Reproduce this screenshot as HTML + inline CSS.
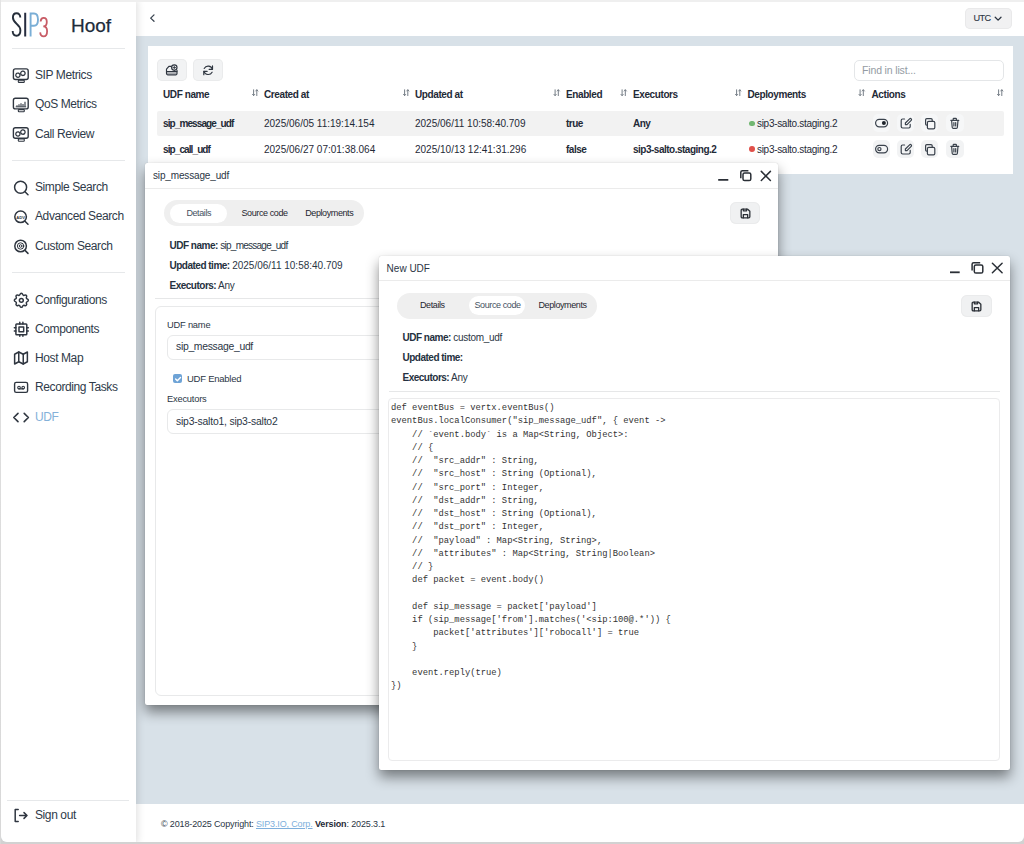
<!DOCTYPE html>
<html><head><meta charset="utf-8">
<style>
*{box-sizing:border-box;margin:0;padding:0}
html,body{width:1024px;height:844px;overflow:hidden;background:#fff;font-family:"Liberation Sans",sans-serif;color:#2b3645}
.abs{position:absolute}
#frame{position:absolute;left:0;top:0;width:1024px;height:844px;background:#d2d2d2}
#app{position:absolute;left:1px;top:2px;width:1023px;height:840px;background:#d8e1e8;border-radius:0 0 6px 6px;overflow:hidden}
#side{position:absolute;left:0;top:0;width:136px;height:844px;background:#fff;box-shadow:1px 0 8px rgba(0,0,0,.14);z-index:2}
.hr{position:absolute;height:1px;background:#e6e8ea}
.mi{position:absolute;left:35px;font-size:12px;letter-spacing:-.4px;color:#2f3b4a;white-space:nowrap;line-height:14px}
.ic{position:absolute}
#hdr{position:absolute;left:136px;top:0;width:888px;height:35.5px;background:#fff}
#foot{position:absolute;left:136px;top:804px;width:888px;height:40px;background:#fff}
.card{position:absolute;background:#fff}
.btn{position:absolute;background:#f2f3f4;border-radius:5px;box-shadow:inset 0 0 0 1px #eaebec}
.th{position:absolute;font-weight:bold;font-size:10px;letter-spacing:-.4px;color:#1f2a37;white-space:nowrap;line-height:12px;margin-top:1px}
.td{position:absolute;font-size:10px;color:#1f2a37;white-space:nowrap;line-height:12px}
.tdb{font-weight:bold;letter-spacing:-.5px}
.win{position:absolute;background:#fff;border-radius:2px;box-shadow:0 7px 13px rgba(0,0,0,.46),0 0 1px rgba(0,0,0,.25)}
.wt{position:absolute;font-size:11px;color:#2b3645;white-space:nowrap;line-height:13px}
.tabs{position:absolute;background:#efefef;border-radius:14px}
.tab{position:absolute;font-size:9px;color:#1f2630;white-space:nowrap;line-height:11px;letter-spacing:-.4px}
.pill{position:absolute;background:#fff;border-radius:10px}
.kv{position:absolute;font-size:10px;color:#2b3645;white-space:nowrap;line-height:12px;letter-spacing:-.3px}
.kv b{color:#253140;letter-spacing:-.5px}
.dg{letter-spacing:0}
pre{position:absolute;font-family:"Liberation Mono",monospace;font-size:8.8px;line-height:13.25px;color:#333;white-space:pre}
</style></head><body>
<div id="frame"></div><div class="abs" style="left:0;top:0;width:1024px;height:2px;background:#efefef"></div><div class="abs" style="left:0;top:0;width:1px;height:844px;background:linear-gradient(#e4e4e4,#d8d8d8)"></div>
<div id="app"><div id="c" style="position:absolute;left:-1px;top:-2px;width:1024px;height:844px">
  <div id="hdr"></div>
  <div id="foot"></div>
  <div id="side">
<svg class="abs" style="left:0;top:0" width="136" height="48" viewBox="0 0 136 48" fill="none" stroke-linecap="butt">
<path d="M20.3 17.5 C20.3 14.8 18.7 13.3 16.6 13.3 C14.4 13.3 12.9 15 12.9 17.6 C12.9 20.8 15 22.4 16.8 23.9 C18.8 25.5 20.4 27.3 20.4 30.6 C20.4 33.6 18.8 35.7 16.5 35.7 C14.1 35.7 12.7 33.7 12.7 31" stroke="#262f3b" stroke-width="1.9"/>
<path d="M25.2 12.7 V36.6" stroke="#262c3f" stroke-width="2"/>
<path d="M30.6 36.6 V13.5 H34 C36.5 13.5 38 15.5 38 19.6 C38 23.7 36.5 25.8 34 25.8 H30.6" stroke="#7aaed6" stroke-width="1.9"/>
<path d="M40.6 21.5 C40.8 19.2 42 17.9 43.7 17.9 C45.6 17.9 46.8 19.5 46.8 22 C46.8 24.8 45.5 26.4 43.3 26.4 C45.7 26.4 47.1 28.2 47.1 31.3 C47.1 34.5 45.7 36.4 43.6 36.4 C41.6 36.4 40.4 34.8 40.2 32.4" stroke="#c85c66" stroke-width="1.8"/>
</svg>
<div class="abs" style="left:71px;top:16.4px;font-size:19px;line-height:20px;color:#1d2b3a;-webkit-text-stroke:.25px #1d2b3a">Hoof</div>
<div class="hr" style="left:12px;top:48px;width:113px"></div>
<div class="hr" style="left:12px;top:160px;width:113px"></div>
<div class="hr" style="left:12px;top:272px;width:113px"></div>
<div class="hr" style="left:7px;top:800px;width:122px"></div>
<svg class="abs" style="left:0;top:0" width="36" height="844" viewBox="0 0 36 844" fill="none" stroke="#2f3640" stroke-linecap="round" stroke-linejoin="round">
 <!-- SIP metrics monitor -->
 <g stroke-width="1.4">
  <rect x="13.4" y="68.9" width="14.8" height="10.6" rx="2"/>
  <rect x="18.3" y="80.2" width="6" height="2.2" rx=".7" stroke-width="1.1"/>
  <circle cx="17.9" cy="75.2" r="2.1" stroke-width="1.3" stroke-dasharray=".9 .45"/>
  <circle cx="22.9" cy="73.3" r="2.2" stroke-width="1.3" stroke-dasharray=".9 .45"/>
 </g>
 <g stroke-width="1.4">
  <rect x="13.4" y="98.3" width="14.8" height="10.6" rx="2"/>
  <rect x="18.3" y="109.6" width="6" height="2.2" rx=".7" stroke-width="1.1"/>
  <path d="M15.6 106.9 h10.6" stroke-width=".8" stroke-linecap="butt"/>
  <path d="M17 106.9v-1.6 M19 106.9v-2.6 M21 106.9v-3.6 M23 106.9v-2.8 M25 106.9v-5.2" stroke-width="1.1" stroke-linecap="butt"/>
 </g>
 <g stroke-width="1.4">
  <rect x="13.4" y="127.7" width="14.8" height="10.6" rx="2"/>
  <rect x="18.3" y="139" width="6" height="2.2" rx=".7" stroke-width="1.1"/>
  <circle cx="17.9" cy="134" r="2.1" stroke-width="1.3" stroke-dasharray=".9 .45"/>
  <circle cx="22.9" cy="132.1" r="2.2" stroke-width="1.3" stroke-dasharray=".9 .45"/>
 </g>
 <!-- search -->
 <g stroke-width="1.5">
  <circle cx="20.6" cy="187.2" r="6"/><path d="M25 191.8 L28 194.8"/>
  <circle cx="20.6" cy="216.8" r="5.8"/><path d="M25 221.2 L28 224.2"/>
  <text x="20.6" y="218.6" font-size="4.2" font-family="Liberation Sans" text-anchor="middle" fill="#2f3640" stroke="none" font-weight="bold">ADV</text>
  <circle cx="20.6" cy="246" r="5.8"/><path d="M25 250.4 L28 253.4"/>
  <circle cx="20.6" cy="246" r="3.2" stroke-width="1"/><circle cx="20.6" cy="246" r="1.3" stroke-width="1"/>
 </g>
</svg>
<svg class="abs" style="left:11.8px;top:290.6px" width="18.7" height="18.7" viewBox="0 0 24 24" fill="none" stroke="#2f3640" stroke-width="1.9" stroke-linecap="round" stroke-linejoin="round"><path d="M10.325 4.317c.426 -1.756 2.924 -1.756 3.35 0a1.724 1.724 0 0 0 2.573 1.066c1.543 -.94 3.31 .826 2.37 2.37a1.724 1.724 0 0 0 1.065 2.572c1.756 .426 1.756 2.924 0 3.35a1.724 1.724 0 0 0 -1.066 2.573c.94 1.543 -.826 3.31 -2.37 2.37a1.724 1.724 0 0 0 -2.572 1.065c-.426 1.756 -2.924 1.756 -3.35 0a1.724 1.724 0 0 0 -2.573 -1.066c-1.543 .94 -3.31 -.826 -2.37 -2.37a1.724 1.724 0 0 0 -1.065 -2.572c-1.756 -.426 -1.756 -2.924 0 -3.35a1.724 1.724 0 0 0 1.066 -2.573c-.94 -1.543 .826 -3.31 2.37 -2.37c1 .608 2.296 .07 2.572 -1.065z"/><path d="M9.5 12a2.5 2.5 0 1 0 5 0a2.5 2.5 0 0 0 -5 0"/></svg>
<svg class="abs" style="left:11.6px;top:319.8px" width="18.7" height="18.7" viewBox="0 0 24 24" fill="none" stroke="#2f3640" stroke-width="1.9" stroke-linecap="round" stroke-linejoin="round"><path d="M6 5h12a1 1 0 0 1 1 1v12a1 1 0 0 1 -1 1h-12a1 1 0 0 1 -1 -1v-12a1 1 0 0 1 1 -1z"/><path d="M9 9h6v6h-6z"/><path d="M3 10h2M3 14h2M10 3v2M14 3v2M21 10h-2M21 14h-2M14 21v-2M10 21v-2"/></svg>
<svg class="abs" style="left:12px;top:349px" width="18" height="18" viewBox="0 0 24 24" fill="none" stroke="#2f3640" stroke-width="2" stroke-linecap="round" stroke-linejoin="round"><path d="M3.5 7l5.5 -3l6 3l5.5 -3v13l-5.5 3l-6 -3l-5.5 3v-13"/><path d="M9 4v13M15 7v13"/></svg>
<svg class="abs" style="left:0;top:370px" width="36" height="60" viewBox="0 370 36 60" fill="none" stroke="#2f3640" stroke-linecap="round" stroke-linejoin="round">
 <rect x="14.6" y="382.4" width="13" height="10" rx="1.6" stroke-width="1.4"/>
 <circle cx="19" cy="387.6" r="1.3" stroke-width="1.1"/><circle cx="23.2" cy="387.6" r="1.3" stroke-width="1.1"/><path d="M19 388.9h4.2" stroke-width="1.1"/>
 <path d="M18 413.4 L13.8 417.5 L18 421.6 M24.2 413.4 L28.4 417.5 L24.2 421.6" stroke-width="1.6"/>
</svg>
<svg class="abs" style="left:0;top:800px" width="36" height="30" viewBox="0 800 36 30" fill="none" stroke="#2f3640" stroke-linecap="round" stroke-linejoin="round" stroke-width="1.5">
 <path d="M18.2 809.6 H15.2 V821.4 H18.2"/><path d="M19.6 815.5 H27 M24 812.6 L27 815.5 L24 818.4"/>
</svg>
<div class="mi" style="top:68.1px">SIP Metrics</div>
<div class="mi" style="top:97.1px">QoS Metrics</div>
<div class="mi" style="top:126.6px">Call Review</div>
<div class="mi" style="top:180px">Simple Search</div>
<div class="mi" style="top:209.4px">Advanced Search</div>
<div class="mi" style="top:238.8px">Custom Search</div>
<div class="mi" style="top:292.5px">Configurations</div>
<div class="mi" style="top:321.8px">Components</div>
<div class="mi" style="top:351.1px">Host Map</div>
<div class="mi" style="top:380.1px">Recording Tasks</div>
<div class="mi" style="top:410px;color:#84b1d9">UDF</div>
<div class="mi" style="top:807.8px">Sign out</div>

  </div>
<!-- header -->
<svg class="abs" style="left:140px;top:8px" width="20" height="20" viewBox="140 8 20 20" fill="none" stroke="#3a4450" stroke-width="1.3" stroke-linecap="round" stroke-linejoin="round"><path d="M154 14.9 L150.7 18.1 L154 21.3"/></svg>
<div class="abs" style="left:965px;top:7.5px;width:47px;height:21.5px;background:#f1f1f2;border-radius:5px;box-shadow:inset 0 0 0 1px #e9e9ea"></div>
<div class="abs" style="left:973.5px;top:13.2px;font-size:9.2px;line-height:10px;color:#2b3440;letter-spacing:-.6px;-webkit-text-stroke:.1px #2b3440">UTC</div>
<svg class="abs" style="left:990px;top:12px" width="16" height="12" viewBox="990 12 16 12" fill="none" stroke="#2b3440" stroke-width="1.3" stroke-linecap="round" stroke-linejoin="round"><path d="M995.2 17.2 L998.1 20.1 L1001 17.2"/></svg>
<!-- footer -->
<div class="abs" style="left:161px;top:819px;font-size:9px;line-height:11px;color:#2b3645;white-space:nowrap;letter-spacing:-.14px">© 2018-2025 Copyright: <span style="color:#7eafdc;text-decoration:underline">SIP3.IO, Corp.</span> <b style="color:#1f2a37">Version</b>: 2025.3.1</div>
<!-- table card -->
<div class="card" style="left:148px;top:46.3px;width:865px;height:127.7px"></div>
<div class="btn" style="left:157px;top:59.4px;width:29.7px;height:21.5px"></div>
<div class="btn" style="left:193.4px;top:59.4px;width:29.7px;height:21.5px"></div>
<svg class="abs" style="left:160px;top:58px" width="70" height="24" viewBox="160 58 70 24" fill="none" stroke="#2f3640" stroke-width="1.15" stroke-linecap="round" stroke-linejoin="round">
 <path d="M171.4 66.3 H168.9 L166.5 69.2 V73.6 A1.2 1.2 0 0 0 167.7 74.8 H175.8 A1.2 1.2 0 0 0 177 73.6 V70.2"/><path d="M166.6 71.6 H176.9"/><path d="M167.4 73.3h9" stroke-width=".8" opacity=".6"/>
 <circle cx="174.3" cy="67.6" r="2.7" fill="#f2f3f4"/><path d="M174.3 66.3v2.6M173 67.6h2.6" stroke-width=".9"/>
 <path d="M212.3 69.2 A4.4 4.4 0 0 0 204.2 68.4 M204 71.4 A4.4 4.4 0 0 0 212.1 72.2"/><path d="M212.5 65.9 V69.3 H209.1 M203.8 74.7 V71.3 H207.2" stroke-width="1.2"/>
</svg>
<div class="abs" style="left:853.5px;top:59.5px;width:150.5px;height:21.5px;border:1px solid #e4e6e8;border-radius:5px;background:#fff"></div>
<div class="abs" style="left:862px;top:64px;font-size:10.5px;line-height:12px;color:#949ba3;letter-spacing:-.15px">Find in list...</div>
<!-- table header -->
<div class="th" style="left:163px;top:88px">UDF name</div>
<div class="th" style="left:264px;top:88px">Created at</div>
<div class="th" style="left:415px;top:88px">Updated at</div>
<div class="th" style="left:566px;top:88px">Enabled</div>
<div class="th" style="left:633px;top:88px">Executors</div>
<div class="th" style="left:747.5px;top:88px">Deployments</div>
<div class="th" style="left:871.5px;top:88px">Actions</div>
<svg class="abs" style="left:0;top:85px" width="1024" height="14" viewBox="0 85 1024 14" fill="none" stroke="#767e87" stroke-width="1" stroke-linecap="round" stroke-linejoin="round">
 <g id="srt"><path d="M253.6 89.8v5.8M252.5 94.4l1.1 1.2l1.1-1.2M256.8 89.8v5.8M255.7 91l1.1-1.2l1.1 1.2"/></g>
 <use href="#srt" x="151"/><use href="#srt" x="301.5"/><use href="#srt" x="368.5"/><use href="#srt" x="483"/><use href="#srt" x="606.5"/><use href="#srt" x="745"/>
</svg>
<!-- rows -->
<div class="abs" style="left:157px;top:110.8px;width:846.5px;height:25.6px;background:#f2f2f2;border-radius:2px"></div>
<div class="td tdb" style="left:163px;top:117.5px;letter-spacing:-.9px">sip_message_udf</div>
<div class="td" style="left:264px;top:117.5px">2025/06/05 11:19:14.154</div>
<div class="td" style="left:415px;top:117.5px">2025/06/11 10:58:40.709</div>
<div class="td tdb" style="left:566px;top:117.5px">true</div>
<div class="td tdb" style="left:633px;top:117.5px">Any</div>
<div class="abs" style="left:749.3px;top:120.5px;width:5.8px;height:5.8px;border-radius:50%;background:#72b772"></div>
<div class="td" style="left:757px;top:117.5px;letter-spacing:-.3px">sip3-salto.staging.2</div>
<div class="td tdb" style="left:163px;top:143.5px;letter-spacing:-.9px">sip_call_udf</div>
<div class="td" style="left:264px;top:143.5px">2025/06/27 07:01:38.064</div>
<div class="td" style="left:415px;top:143.5px">2025/10/13 12:41:31.296</div>
<div class="td tdb" style="left:566px;top:143.5px">false</div>
<div class="td tdb" style="left:633px;top:143.5px">sip3-salto.staging.2</div>
<div class="abs" style="left:749.3px;top:146.3px;width:5.8px;height:5.8px;border-radius:50%;background:#e0504a"></div>
<div class="td" style="left:757px;top:143.5px;letter-spacing:-.3px">sip3-salto.staging.2</div>
<!-- action buttons -->
<div class="abs" style="left:872.7px;top:113.8px;width:17.6px;height:18.4px;border-radius:5px;background:#f6f7f8"></div>
<div class="abs" style="left:896.8px;top:113.8px;width:17.6px;height:18.4px;border-radius:5px;background:#f6f7f8"></div>
<div class="abs" style="left:920.9px;top:113.8px;width:17.6px;height:18.4px;border-radius:5px;background:#f6f7f8"></div>
<div class="abs" style="left:946px;top:113.8px;width:17.6px;height:18.4px;border-radius:5px;background:#f6f7f8"></div>
<div class="abs" style="left:872.7px;top:139.8px;width:17.6px;height:18.4px;border-radius:5px;background:#f2f3f4"></div>
<div class="abs" style="left:896.8px;top:139.8px;width:17.6px;height:18.4px;border-radius:5px;background:#f2f3f4"></div>
<div class="abs" style="left:920.9px;top:139.8px;width:17.6px;height:18.4px;border-radius:5px;background:#f2f3f4"></div>
<div class="abs" style="left:946px;top:139.8px;width:17.6px;height:18.4px;border-radius:5px;background:#f2f3f4"></div>
<svg class="abs" style="left:860px;top:108px" width="120" height="56" viewBox="860 108 120 56" fill="none" stroke="#3a424c" stroke-width="1.2" stroke-linecap="round" stroke-linejoin="round">
 <g id="acts">
  <path d="M904.6 119 H902.6 A1.4 1.4 0 0 0 901.2 120.4 V126.6 A1.4 1.4 0 0 0 902.6 128 H908.8 A1.4 1.4 0 0 0 910.2 126.6 V124.4"/>
  <path d="M905.4 124.6 H907 L911.2 120.4 A1.1 1.1 0 0 0 909.6 118.8 L905.4 123 Z"/>
  <rect x="927.4" y="121.4" width="7.4" height="7.4" rx="1.3"/>
  <path d="M932.2 121.4 V119.8 A1.2 1.2 0 0 0 931 118.6 H926.8 A1.2 1.2 0 0 0 925.6 119.8 V124 A1.2 1.2 0 0 0 926.8 125.2"/>
  <path d="M950.8 120.3 H958.8 M951.6 120.3 L952.2 127.2 A1.2 1.2 0 0 0 953.4 128.3 H956.2 A1.2 1.2 0 0 0 957.4 127.2 L958 120.3 M953.2 120.3 V118.9 A.6 .6 0 0 1 953.8 118.3 H955.8 A.6 .6 0 0 1 956.4 118.9 V120.3 M953.9 122.6 V126 M955.7 122.6 V126"/>
 </g>
 <use href="#acts" y="26"/>
 <rect x="875.6" y="119.4" width="12" height="7.4" rx="3.7"/><circle cx="883.9" cy="123.1" r="2" fill="#1f252c" stroke="none"/>
 <rect x="875.6" y="145.4" width="12" height="7.4" rx="3.7"/><circle cx="879.4" cy="149.1" r="1.6"/>
 <path d="M998.4 89.8v5.8M997.3 94.4l1.1 1.2l1.1-1.2M1001.6 89.8v5.8M1000.5 91l1.1-1.2l1.1 1.2" stroke="#767e87" stroke-width="1"/>
</svg>

<!-- window 1 -->
<div class="win" style="left:145.4px;top:163px;width:633px;height:542px"></div>
<div class="wt" style="left:153px;top:168.6px;font-size:10px;letter-spacing:-.15px">sip_message_udf</div>
<div class="abs" style="left:145.4px;top:187.5px;width:633px;height:1px;background:#ebebeb"></div>
<svg class="abs" style="left:710px;top:165px" width="70" height="22" viewBox="710 165 70 22" fill="none" stroke="#2a2f36" stroke-width="1.5" stroke-linecap="butt" stroke-linejoin="round">
 <path d="M718.2 179.8 H728.3" stroke-width="1.8"/>
 <rect x="743" y="172.9" width="7.8" height="7.7" rx="1.6"/>
 <path d="M740.8 178.2 V172.3 A1.6 1.6 0 0 1 742.4 170.7 H748.4"/>
 <path d="M761.3 171.4 L770.4 180.5 M770.4 171.4 L761.3 180.5" stroke-linecap="round"/>
</svg>
<div class="tabs" style="left:163.7px;top:200px;width:200px;height:26.2px"></div>
<div class="pill" style="left:170px;top:204px;width:57.4px;height:18.7px"></div>
<div class="tab" style="left:186.4px;top:207.5px;color:#46525f">Details</div>
<div class="tab" style="left:241.5px;top:207.5px">Source code</div>
<div class="tab" style="left:305.2px;top:207.5px">Deployments</div>
<div class="btn" style="left:730.4px;top:202.2px;width:29.3px;height:22.2px;border-radius:6px;background:#f0f1f2"></div>
<svg class="abs" style="left:738.6px;top:207.2px" width="13" height="13" viewBox="0 0 24 24" fill="none" stroke="#2a2f36" stroke-width="2.4" stroke-linecap="round" stroke-linejoin="round"><path d="M6 4h10l4 4v10a2 2 0 0 1 -2 2h-12a2 2 0 0 1 -2 -2v-12a2 2 0 0 1 2 -2"/><path d="M8 20v-6h8v6"/><path d="M14 4v3h-6v-3"/></svg>
<div class="kv" style="left:169.5px;top:239.5px"><b>UDF name:</b> <span style="letter-spacing:-.75px">sip_message_udf</span></div>
<div class="kv" style="left:169.5px;top:259.5px"><b>Updated time:</b> <span class="dg">2025/06/11 10:58:40.709</span></div>
<div class="kv" style="left:169.5px;top:279.5px"><b>Executors:</b> Any</div>
<div class="abs" style="left:154.6px;top:298px;width:615px;height:1px;background:#e6e7e8"></div>
<div class="abs" style="left:155px;top:306px;width:615px;height:389.5px;border:1px solid #e8e9ea;border-radius:6px"></div>
<div class="kv" style="left:167px;top:318.5px;font-size:9.3px;letter-spacing:-.2px">UDF name</div>
<div class="abs" style="left:167px;top:334.7px;width:590px;height:25px;border:1px solid #e8e9ea;border-radius:6px"></div>
<div class="kv" style="left:176px;top:340.5px;font-size:10.4px;letter-spacing:-.3px;color:#2b3645">sip_message_udf</div>
<div class="abs" style="left:172.5px;top:373.7px;width:9.8px;height:9.8px;border-radius:2px;background:#6ea3d6"></div>
<svg class="abs" style="left:172.5px;top:373.7px" width="10" height="10" viewBox="0 0 10 10" fill="none" stroke="#fff" stroke-width="1.4" stroke-linecap="round" stroke-linejoin="round"><path d="M2.6 5.1 L4.3 6.8 L7.5 3.4"/></svg>
<div class="kv" style="left:187px;top:373px;font-size:9.5px;letter-spacing:-.25px">UDF Enabled</div>
<div class="kv" style="left:167px;top:393px;font-size:9.3px;letter-spacing:-.2px">Executors</div>
<div class="abs" style="left:167px;top:409px;width:590px;height:25px;border:1px solid #e8e9ea;border-radius:6px"></div>
<div class="kv" style="left:176px;top:415.5px;font-size:10.4px;letter-spacing:-.2px">sip3-salto1, sip3-salto2</div>
<!-- window 2 -->
<div class="win" style="left:379.3px;top:256px;width:630.7px;height:514px"></div>
<div class="wt" style="left:386.6px;top:261.5px;font-size:10px;letter-spacing:0">New UDF</div>
<div class="abs" style="left:379.3px;top:280.2px;width:630.7px;height:1px;background:#ebebeb"></div>
<svg class="abs" style="left:940px;top:258px" width="70" height="22" viewBox="940 258 70 22" fill="none" stroke="#2a2f36" stroke-width="1.5" stroke-linecap="butt" stroke-linejoin="round">
 <path d="M950 272.3 H959.7" stroke-width="1.8"/>
 <rect x="974.3" y="265" width="8.5" height="8" rx="1.6"/>
 <path d="M972.1 270.6 V264.3 A1.6 1.6 0 0 1 973.7 262.7 H980.2"/>
 <path d="M992.4 263.3 L1002.1 272.8 M1002.1 263.3 L992.4 272.8" stroke-linecap="round"/>
</svg>
<div class="tabs" style="left:397px;top:292.6px;width:199.6px;height:26.1px"></div>
<div class="pill" style="left:469px;top:296.3px;width:56px;height:19px"></div>
<div class="tab" style="left:420px;top:300px">Details</div>
<div class="tab" style="left:474.5px;top:300px;color:#46525f">Source code</div>
<div class="tab" style="left:538.5px;top:300px">Deployments</div>
<div class="btn" style="left:961.4px;top:295.3px;width:30.2px;height:22.2px;border-radius:6px;background:#f0f1f2"></div>
<svg class="abs" style="left:970px;top:300.3px" width="13" height="13" viewBox="0 0 24 24" fill="none" stroke="#2a2f36" stroke-width="2.4" stroke-linecap="round" stroke-linejoin="round"><path d="M6 4h10l4 4v10a2 2 0 0 1 -2 2h-12a2 2 0 0 1 -2 -2v-12a2 2 0 0 1 2 -2"/><path d="M8 20v-6h8v6"/><path d="M14 4v3h-6v-3"/></svg>
<div class="kv" style="left:402.5px;top:332px"><b>UDF name:</b> custom_udf</div>
<div class="kv" style="left:402.5px;top:351.5px"><b>Updated time:</b></div>
<div class="kv" style="left:402.5px;top:372px"><b>Executors:</b> Any</div>
<div class="abs" style="left:389px;top:390.5px;width:611px;height:1px;background:#e6e7e8"></div>
<div class="abs" style="left:388px;top:398px;width:612px;height:362.5px;border:1px solid #ebebec;border-radius:4px"></div>
<pre style="left:391px;top:402px">def eventBus = vertx.eventBus()
eventBus.localConsumer("sip_message_udf", { event ->
    // `event.body` is a Map&lt;String, Object&gt;:
    // {
    //  "src_addr" : String,
    //  "src_host" : String (Optional),
    //  "src_port" : Integer,
    //  "dst_addr" : String,
    //  "dst_host" : String (Optional),
    //  "dst_port" : Integer,
    //  "payload" : Map&lt;String, String&gt;,
    //  "attributes" : Map&lt;String, String|Boolean&gt;
    // }
    def packet = event.body()

    def sip_message = packet['payload']
    if (sip_message['from'].matches('&lt;sip:100@.*')) {
        packet['attributes']['robocall'] = true
    }

    event.reply(true)
})</pre>

<!--MAIN-->
</div></div>
</body></html>
